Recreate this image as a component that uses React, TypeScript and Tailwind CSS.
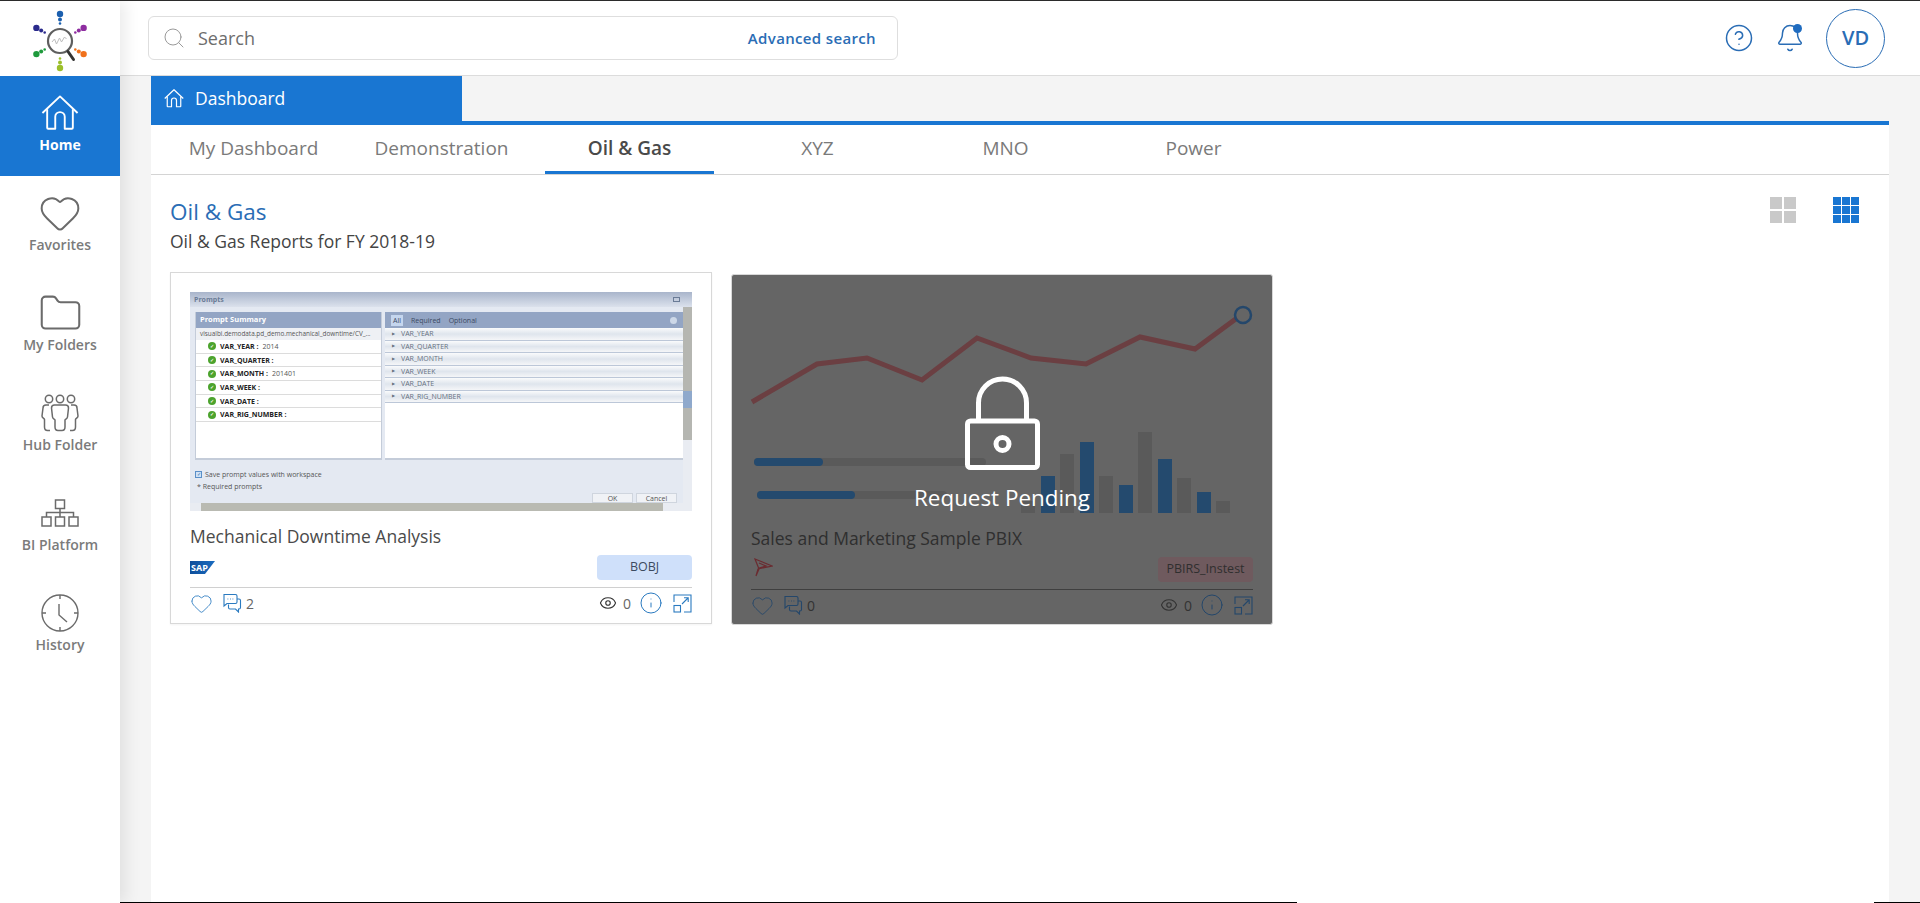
import { Search, Heart, Folder, Eye, Info, CircleHelp, Bell } from "lucide-react";

const sideItems = [
  { label: "Favorites", icon: <Heart size={44} strokeWidth={1.1} /> },
  { label: "My Folders", icon: <Folder size={45} strokeWidth={1.1} /> },
  { label: "Hub Folder", icon: <HubIcon /> },
  { label: "BI Platform", icon: <PlatformIcon /> },
  { label: "History", icon: <ClockIcon /> },
];

const tabs = [
  { name: "My Dashboard" },
  { name: "Demonstration" },
  { name: "Oil & Gas", active: true },
  { name: "XYZ" },
  { name: "MNO" },
  { name: "Power" },
];

const promptRows = [
  { k: "VAR_YEAR", v: "2014" },
  { k: "VAR_QUARTER", v: "" },
  { k: "VAR_MONTH", v: "201401" },
  { k: "VAR_WEEK", v: "" },
  { k: "VAR_DATE", v: "" },
  { k: "VAR_RIG_NUMBER", v: "" },
];

const bars = [
  { h: 12, c: "bg-[#5a5a5a]" },
  { h: 37, c: "bg-[#244a6e]" },
  { h: 59, c: "bg-[#5a5a5a]" },
  { h: 71, c: "bg-[#244a6e]" },
  { h: 37, c: "bg-[#5a5a5a]" },
  { h: 28, c: "bg-[#244a6e]" },
  { h: 81, c: "bg-[#5a5a5a]" },
  { h: 54, c: "bg-[#244a6e]" },
  { h: 35, c: "bg-[#5a5a5a]" },
  { h: 21, c: "bg-[#244a6e]" },
  { h: 12, c: "bg-[#5a5a5a]" },
];

function HouseIcon({ width, stroke }: { width: number; stroke: number }) {
  return (
    <svg width={width} viewBox="0 0 40 37" fill="none" stroke="currentColor" strokeWidth={stroke} strokeLinejoin="round">
      <path d="M1.500 19L20 1.500 38.500 19" />
      <path d="M6.500 15v19.500a1 1 0 0 0 1 1h7.500V23a5 5 0 0 1 10 0v12.500h7.500a1 1 0 0 0 1-1V15" />
    </svg>
  );
}

function HubIcon() {
  return (
    <svg width="38" height="38" viewBox="0 0 38 38" fill="none" stroke="#6b6b6b" strokeWidth="1.500">
      <circle cx="8" cy="5" r="3.700" />
      <circle cx="19" cy="5" r="3.700" />
      <circle cx="30" cy="5" r="3.700" />
      <path d="M13.500 11h11c2 0 3 1 3 3l-1 9c-.3 2-2 2-2.500 3v7c0 2-1 3.500-3 3.500h-4c-2 0-3-1.500-3-3.500v-7c-.5-1-2.200-1-2.500-3l-1-9c0-2 1-3 3-3z" />
      <path d="M8 11H5c-2 0-3 1-3 3l-1 8c0 2 2 2 2.500 3.500V33c0 2 1 3.500 3 3.500H9" />
      <path d="M30 11h3c2 0 3 1 3 3l1 8c0 2-2 2-2.500 3.500V33c0 2-1 3.500-3 3.500H29" />
    </svg>
  );
}

function PlatformIcon() {
  return (
    <svg width="38" height="28" viewBox="0 0 38 28" fill="none" stroke="#6b6b6b" strokeWidth="1.500">
      <rect x="14.500" y="1" width="9" height="8.500" />
      <rect x="1" y="18" width="9" height="9" />
      <rect x="14.500" y="18" width="9" height="9" />
      <rect x="28" y="18" width="9" height="9" />
      <path d="M19 9.500V18M5.500 18v-4.500h27V18" />
    </svg>
  );
}

function ClockIcon() {
  return (
    <svg width="38" height="38" viewBox="0 0 38 38" fill="none" stroke="#6b6b6b" strokeWidth="1.400">
      <circle cx="19" cy="19" r="18" />
      <path d="M19 1v4M19 33v4M1 19h4M33 19h4" />
      <path d="M18 10v11l8 7" />
    </svg>
  );
}

function Logo() {
  const arms = [
    { a: -90, c: "#1b5fae" },
    { a: -29, c: "#8e2da0" },
    { a: 29, c: "#f0711b" },
    { a: 90, c: "#9cbf2b" },
    { a: 151, c: "#1f9a3c" },
    { a: 209, c: "#2a2a8c" },
  ];
  return (
    <svg width="60" height="64" viewBox="-30 -32 60 64" className="mt-[5px]">
      {arms.map((arm) => {
        const rad = (arm.a * Math.PI) / 180;
        const p = (d: number) => ({ cx: Math.cos(rad) * d, cy: Math.sin(rad) * d });
        return (
          <g key={arm.a} fill={arm.c}>
            <circle {...p(27)} r="3.200" />
            <circle {...p(21.500)} r="2" />
            <circle {...p(17.500)} r="1.300" />
          </g>
        );
      })}
      <circle cx="0" cy="0" r="12" fill="#fff" stroke="#5e5e5e" strokeWidth="2.200" />
      <path d="M-8 1l2.500-3 2 5 3-6 2 4 3-5 2 2" fill="none" stroke="#bdbdbd" strokeWidth="1" />
      <path d="M8 10.500l5.500 8" stroke="#333" strokeWidth="3" strokeLinecap="round" />
    </svg>
  );
}

function Thumb() {
  return (
    <div className="flex h-[219px] flex-col bg-[#e4e9f2] text-[7px] leading-none text-[#555]">
      <div className="flex h-[15px] shrink-0 items-center justify-between bg-gradient-to-b from-[#a9b5cb] to-[#dbe1ec] pl-1 pr-[12px] font-bold text-[#6a7b96]">
        <span>Prompts</span>
        <span className="h-[5px] w-[7px] border border-[#6a7b96]" />
      </div>
      <div className="flex min-h-0 flex-1">
        <div className="flex min-w-0 flex-1 flex-col">
          <div className="flex h-[153px] shrink-0 gap-[3px] pl-[5px] pt-[5px]">
            <div className="flex w-[187px] shrink-0 flex-col border-x border-b-2 border-[#c4ccd9] bg-white">
              <div className="flex h-[16px] shrink-0 items-center bg-[#93a5c4] px-1 text-[7.500px] font-bold text-white">Prompt Summary</div>
              <div className="flex h-[12px] shrink-0 items-center bg-[#eef0f4] px-1 text-[6.400px] whitespace-nowrap">visualbi.demodata.pd_demo.mechanical_downtime/CV_...</div>
              {promptRows.map((r) => (
                <div key={r.k} className="flex h-[13.700px] shrink-0 items-center gap-[4px] border-b border-[#dcdcdc] pl-[12px]">
                  <span className="flex size-[8px] items-center justify-center rounded-full bg-[#4ca32d] text-[5px] font-bold text-white">✓</span>
                  <span className="font-bold text-[#222]">{r.k} :</span>
                  <span>{r.v}</span>
                </div>
              ))}
            </div>
            <div className="flex min-w-0 flex-1 flex-col border-b-2 border-[#c4ccd9] bg-white">
              <div className="flex h-[16px] shrink-0 items-center gap-[8px] bg-[#93a5c4] px-[6px] text-[#3b4a63]">
                <span className="bg-[#c5d6ee] px-[2px] py-[2px]">All</span>
                <span>Required</span>
                <span>Optional</span>
                <span className="ml-auto size-[7px] rounded-full bg-[#cdd8e8]" />
              </div>
              {promptRows.map((r) => (
                <div key={r.k} className="flex h-[12.500px] shrink-0 items-center gap-[6px] border-b border-[#bcc7d8] bg-gradient-to-b from-[#fafbfc] via-[#dfe5ed] to-[#f5f6f8] pl-[7px] text-[#66707f]">
                  <span className="text-[4px]">▶</span>
                  <span>{r.k}</span>
                </div>
              ))}
            </div>
          </div>
          <div className="flex items-center gap-[3px] px-[5px] pt-[11px]">
            <span className="flex size-[7px] items-center justify-center border border-[#5a8fc8] bg-[#cfe2f6] text-[5px] text-[#2a6cad]">✓</span>
            <span>Save prompt values with workspace</span>
          </div>
          <div className="px-[7px] pt-[5px]">* Required prompts</div>
          <div className="mt-auto flex justify-end gap-[3px] pr-[6px]">
            <span className="flex h-[10px] w-[41px] items-center justify-center border border-[#cfd5de] bg-[#f0f2f6]">OK</span>
            <span className="flex h-[10px] w-[41px] items-center justify-center border border-[#cfd5de] bg-[#f0f2f6]">Cancel</span>
          </div>
          <div className="flex h-[8px] shrink-0 items-center bg-[#b9bab2]">
            <span className="h-full w-[11px] bg-[#e9ecf2]" />
            <span className="ml-auto h-full w-[20px] bg-[#e9ecf2]" />
          </div>
        </div>
        <div className="relative flex w-[9px] shrink-0 flex-col bg-[#e9ecf2]">
          <div className="h-[133px] bg-[#b5b6b1]" />
          <div className="absolute left-0 top-[84px] h-[17px] w-[9px] bg-[#8fa9cc]" />
        </div>
      </div>
    </div>
  );
}

function ChatIcon({ className }: { className: string }) {
  return (
    <svg width="20" height="20" viewBox="0 0 20 20" fill="none" stroke="currentColor" strokeWidth="1.100" className={className}>
      <path d="M2 1.500h11.500a1.500 1.500 0 0 1 1.500 1.500v6a1.500 1.500 0 0 1-1.500 1.500H5L2 13V3z" />
      <path d="M15 6h2a1.500 1.500 0 0 1 1.500 1.500v7a1.500 1.500 0 0 1-1.500 1.500h-.5v3l-3-3H8a1.500 1.500 0 0 1-1.500-1.500v-3" />
      <path d="M5.500 6h.8M8 6h.8M10.500 6h.8" />
    </svg>
  );
}

function ExpandIcon({ className }: { className: string }) {
  return (
    <svg width="19" height="19" viewBox="0 0 19 19" fill="none" stroke="currentColor" strokeWidth="1.100" className={className}>
      <path d="M1 8V1h17v17h-7" />
      <rect x="1" y="11.500" width="6.500" height="6.500" />
      <path d="M9 10l6-6M11 3.800h4.200V8" />
    </svg>
  );
}

function CardFooter({ comments, blue, tone }: { comments: string; blue: string; tone: string }) {
  return (
    <div className="flex h-[30px] items-center justify-between">
      <div className={`flex items-center ${tone}`}>
        <Heart size={23} strokeWidth={0.9} className={`${blue}`} />
        <ChatIcon className={`ml-[9px] ${blue}`} />
        <span className="ml-[4px] text-[14px]">{comments}</span>
      </div>
      <div className={`flex items-center ${tone}`}>
        <Eye size={18} strokeWidth={1.500} className="text-[#333]" />
        <span className="ml-[6px] text-[14px]">0</span>
        <Info size={24} strokeWidth={1} className={`ml-[8px] ${blue}`} />
        <ExpandIcon className={`ml-[10px] ${blue}`} />
      </div>
    </div>
  );
}

export default function App() {
  return (
    <div className="relative flex h-[903px] overflow-hidden border-t border-[#2b2b2b] bg-[#f4f4f4] font-['Open_Sans',sans-serif]">
      <aside className="z-10 flex w-[120px] shrink-0 flex-col bg-white shadow-[6px_0_14px_rgba(0,0,0,0.08)]">
        <div className="flex h-[75px] items-center justify-center">
          <Logo />
        </div>
        <div className="flex h-[100px] flex-col items-center bg-[#1976d2] pt-[13px] text-white">
          <div className="flex h-[48px] items-center justify-center">
            <HouseIcon width={38} stroke={2} />
          </div>
          <span className="text-[14px] font-bold leading-[16px]">Home</span>
        </div>
        {sideItems.map((item) => (
          <div key={item.label} className="flex h-[100px] flex-col items-center pt-[13px] text-[#6b6b6b]">
            <div className="flex h-[48px] items-center justify-center">{item.icon}</div>
            <span className="text-[14px] font-semibold leading-[16px] text-[#7b7b7b]">{item.label}</span>
          </div>
        ))}
      </aside>

      <div className="flex min-w-0 flex-1 flex-col">
        <header className="flex h-[75px] shrink-0 items-center border-b border-[#dcdcdc] bg-white pl-[28px] pr-[35px]">
          <div className="flex h-[44px] w-[750px] items-center rounded-[6px] border border-[#dedede] pl-[13px] pr-[21px]">
            <Search size={24} strokeWidth={1} className="text-[#9a9a9a]" />
            <span className="ml-[12px] text-[18px] text-[#6d6d6d]">Search</span>
            <span className="ml-auto text-[15px] font-semibold tracking-[0.35px] text-[#2a6db5]">Advanced search</span>
          </div>
          <div className="ml-auto flex items-center text-[#2a6db5]">
            <CircleHelp size={30} strokeWidth={1.200} />
            <div className="relative ml-[21px]">
              <Bell size={30} strokeWidth={1.200} />
              <span className="absolute right-[3px] top-[1px] size-[9px] rounded-full bg-[#1f6cc0]" />
            </div>
            <div className="ml-[21px] flex size-[59px] items-center justify-center rounded-full border border-[#2a6db5] text-[20px] font-semibold">VD</div>
          </div>
        </header>

        <div className="flex min-h-0 flex-1 flex-col pl-[31px] pr-[31px]">
          <div className="flex h-[49px] w-[311px] shrink-0 items-center bg-[#1976d2] pb-[4px] pl-[13px] text-white">
            <HouseIcon width={20} stroke={2.400} />
            <span className="ml-[11px] text-[17.500px]">Dashboard</span>
          </div>
          <div className="-mt-[4px] h-[4px] shrink-0 bg-[#1976d2]" />
          <main className="flex-1 bg-white">
            <nav className="flex h-[50px] items-stretch gap-[19px] border-b border-[#d4d4d4] pl-[18px] text-[19px]">
              {tabs.map((t) => (
                <div
                  key={t.name}
                  className={`flex w-[169px] items-center justify-center border-b-[3px] ${t.active ? "border-[#1976d2] font-semibold text-[#4a4a4a]" : "border-transparent text-[#7a7a7a]"}`}
                >
                  {t.name}
                </div>
              ))}
            </nav>

            <section className="px-[19px]">
              <div className="flex items-start justify-between pt-[22px]">
                <div>
                  <h1 className="text-[22.500px] leading-[30px] text-[#2a6db5]">Oil &amp; Gas</h1>
                  <p className="mt-[2px] text-[17.500px] leading-[24px] text-[#444]">Oil &amp; Gas Reports for FY 2018-19</p>
                </div>
                <div className="flex items-center gap-[37px] pr-[11px]">
                  <div className="grid size-[26px] grid-cols-2 gap-[2px]">
                    {[0, 1, 2, 3].map((i) => (
                      <span key={i} className="bg-[#c9c9c9]" />
                    ))}
                  </div>
                  <div className="grid size-[26px] grid-cols-3 gap-[1.500px]">
                    {[0, 1, 2, 3, 4, 5, 6, 7, 8].map((i) => (
                      <span key={i} className="bg-[#1976d2]" />
                    ))}
                  </div>
                </div>
              </div>

              <div className="mt-[19px] flex items-start gap-[19px]">
                <article className="h-[352px] w-[542px] border border-[#d8d8d8] bg-white px-[19px] pt-[19px] shadow-[0_1px_2px_rgba(0,0,0,0.05)]">
                  <Thumb />
                  <h3 className="mt-[13px] text-[17.500px] leading-[24px] text-[#4a4a4a]">Mechanical Downtime Analysis</h3>
                  <div className="mt-[7px] flex h-[25px] items-center justify-between">
                    <div className="flex h-[13px] w-[25px] items-center bg-[linear-gradient(90deg,#0d4d9a,#1b6cc0)] pl-[1px] text-[9px] font-bold leading-none text-white [clip-path:polygon(0_0,100%_0,60%_100%,0_100%)]">
                      SAP
                    </div>
                    <span className="flex h-[25px] w-[95px] items-center justify-center rounded-[4px] bg-[#cfe0fa] text-[12.500px] text-[#3c4a60]">BOBJ</span>
                  </div>
                  <div className="mt-[7px] border-t border-[#d0d0d0]">
                    <CardFooter comments="2" blue="text-[#2a7ac0]" tone="text-[#666]" />
                  </div>
                </article>

                <article className="relative mt-[2px] h-[351px] w-[542px] overflow-hidden rounded-[3px] border border-[#d8d8d8] bg-[#656565] px-[19px] pt-[19px]">
                  <div className="relative h-[219px]">
                    <svg width="506" height="219" viewBox="0 0 506 219" className="absolute -left-[1px] top-0" fill="none">
                      <path d="M2 108L67 70l50-6 55 22 55-42 54 20 55 6 54-27 55 12 42-31" stroke="#6b3f42" strokeWidth="5" />
                      <circle cx="493" cy="21" r="8" stroke="#24476b" strokeWidth="2.500" />
                    </svg>
                    <div className="absolute left-[3px] top-[164px] h-[8px] w-[232px] rounded-full bg-[#5a5a5a]">
                      <div className="h-full w-[69px] rounded-full bg-[#244a6e]" />
                    </div>
                    <div className="absolute left-[6px] top-[197px] h-[8px] w-[190px] rounded-full bg-[#5a5a5a]">
                      <div className="h-full w-[98px] rounded-full bg-[#244a6e]" />
                    </div>
                    <div className="absolute bottom-0 right-[23px] flex items-end gap-[5.500px]">
                      {bars.map((b, i) => (
                        <div key={i} className={`w-[14px] ${b.c}`} style={{ height: b.h }} />
                      ))}
                    </div>
                  </div>
                  <h3 className="mt-[13px] text-[17.500px] leading-[24px] text-[#2f2f2f]">Sales and Marketing Sample PBIX</h3>
                  <div className="mt-[7px] flex h-[25px] items-center justify-between">
                    <svg width="20" height="20" viewBox="0 0 20 20" fill="none" stroke="#6b2b30" strokeWidth="1.200" className="-mt-[6px] ml-[2px]">
                      <path d="M2 2l17 7-14 3-2 7 3-7zM6 6l7 3-7 2" />
                    </svg>
                    <span className="flex h-[25px] w-[95px] items-center justify-center rounded-[4px] bg-[#6f5a5e] text-[12.500px] text-[#2f2f2f]">PBIRS_Instest</span>
                  </div>
                  <div className="mt-[7px] border-t border-[#3f3f3f]">
                    <CardFooter comments="0" blue="text-[#24476b]" tone="text-[#333]" />
                  </div>
                  <div className="absolute inset-0 flex flex-col items-center pt-[101px] text-white">
                    <svg width="75" height="94" viewBox="0 0 75 94" fill="none" stroke="currentColor" strokeWidth="5">
                      <path d="M13.500 46V27a24 24 0 0 1 48 0v19" />
                      <rect x="2.500" y="45" width="70" height="46.500" rx="3" />
                      <circle cx="37.500" cy="68" r="6.500" />
                    </svg>
                    <span className="mt-[13px] text-[22.400px] leading-[30px]">Request Pending</span>
                  </div>
                </article>
              </div>
            </section>
          </main>
        </div>
      </div>
      <div className="absolute bottom-0 left-0 h-[1px] w-[1297px] bg-black" />
      <div className="absolute bottom-0 right-0 h-[1px] w-[46px] bg-black" />
    </div>
  );
}
